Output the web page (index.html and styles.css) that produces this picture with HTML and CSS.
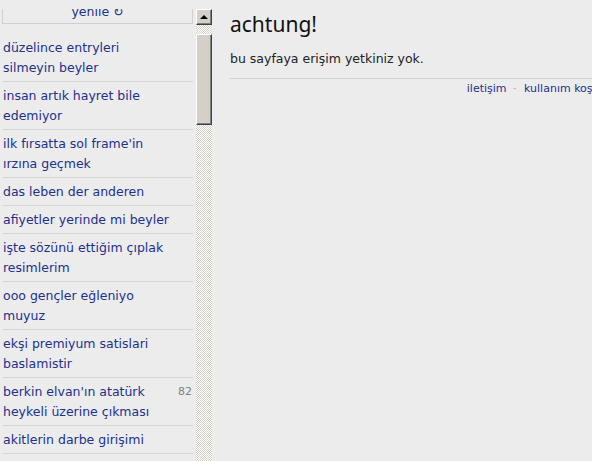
FILE: index.html
```html
<!DOCTYPE html>
<html>
<head>
<meta http-equiv="Content-Type" content="text/html; charset=utf-8"/>
<title>achtung!</title>
<link rel="stylesheet" href="styles.css">
</head>
<body>

<div class="frame">
  <div class="pane">
    <div class="refresh"><a href="#">yenile &#8635;</a></div>
    <ul class="topics">
      <li><a href="#">düzelince entryleri silmeyin beyler</a></li>
      <li><a href="#">insan artık hayret bile edemiyor</a></li>
      <li><a href="#">ilk fırsatta sol frame'in ırzına geçmek</a></li>
      <li><a href="#">das leben der anderen</a></li>
      <li><a href="#">afiyetler yerinde mi beyler</a></li>
      <li><a href="#">işte sözünü ettiğim çıplak resimlerim</a></li>
      <li><a href="#">ooo gençler eğleniyo muyuz</a></li>
      <li><a href="#">ekşi premiyum satislari baslamistir</a></li>
      <li><a href="#">berkin elvan'ın atatürk heykeli üzerine çıkması</a><span class="count">82</span></li>
      <li><a href="#">akitlerin darbe girişimi</a></li>
    </ul>
  </div>
  <div class="scrollbar">
    <div class="btn-up"><span class="arrow"></span></div>
    <div class="track">
      <div class="thumb"></div>
    </div>
  </div>
</div>

<div class="main">
  <h1>achtung!</h1>
  <p>bu sayfaya erişim yetkiniz yok.</p>
  <div class="footer">
    <a href="#">iletişim</a> <span class="dot">&middot;</span> <a href="#">kullanım koşulları</a>
  </div>
</div>

</body>
</html>
```

FILE: styles.css
```css
html, body {
   margin: 0;
   height: 100%;
   overflow: hidden;
}

body {
   display: flex;
   background-color: #ececec;
   font-family: 'DejaVu Sans', sans-serif;
   font-size: 12.5px;
   color: #222;
}

a {
   color: #22318b;
   text-decoration: none;
}

/* left frame */

.frame {
   display: flex;
   flex: none;
   width: 213px;
   height: 452px;
   margin-top: 9px;
   overflow: hidden;
}

.pane {
   width: 196px;
   flex: none;
}

.refresh {
   margin: -7px 0 0 2px;
   width: 189px;
   border: 1px solid #cfcfcf;
   border-top: none;
   line-height: 19px;
   padding-bottom: 2px;
   text-align: center;
}

.topics {
   list-style: none;
   margin: 10px 0 0 3px;
   padding: 0;
   width: 190px;
}

.topics li {
   display: flex;
   justify-content: space-between;
   align-items: flex-start;
   padding: 4px 0 3px;
   line-height: 20px;
   border-bottom: 1px solid #d6d6d6;
}

.topics li a {
   width: 172px;
}

.count {
   color: #808080;
   font-size: 11px;
   padding-right: 1px;
}

/* win classic scrollbar */

.scrollbar {
   width: 16px;
   flex: none;
   display: flex;
   flex-direction: column;
}

.btn-up, .thumb {
   box-sizing: border-box;
   background: #d4d0c8;
   border: 1px solid;
   border-color: #fff #404040 #404040 #fff;
   box-shadow: inset -1px -1px 0 #808080;
}

.btn-up {
   height: 16px;
   display: flex;
   align-items: center;
   justify-content: center;
}

.arrow {
   width: 0;
   height: 0;
   border-left: 4px solid transparent;
   border-right: 4px solid transparent;
   border-bottom: 4px solid #000;
   margin-top: -1px;
}

.track {
   flex: 1;
   background: repeating-conic-gradient(#d4d0c8 0 25%, #fff 0 50%) 0 0 / 2px 2px;
}

.thumb {
   height: 91px;
   margin-top: 9px;
}

/* right side */

.main {
   flex: none;
   width: 390px;
   padding-left: 17px;
}

h1 {
   font-family: 'Noto Sans', sans-serif;
   font-weight: normal;
   font-size: 21px;
   color: #111;
   margin: 9px 0 0;
   line-height: 30px;
}

p {
   margin: 10px 0 0;
   line-height: 19px;
}

.footer {
   margin-top: 10px;
   border-top: 1px solid #d0d0d0;
   padding-top: 1px;
   text-align: right;
   font-size: 11px;
   line-height: 17px;
}

.dot {
   color: #999;
   margin: 0 4px 0 3px;
}
```
